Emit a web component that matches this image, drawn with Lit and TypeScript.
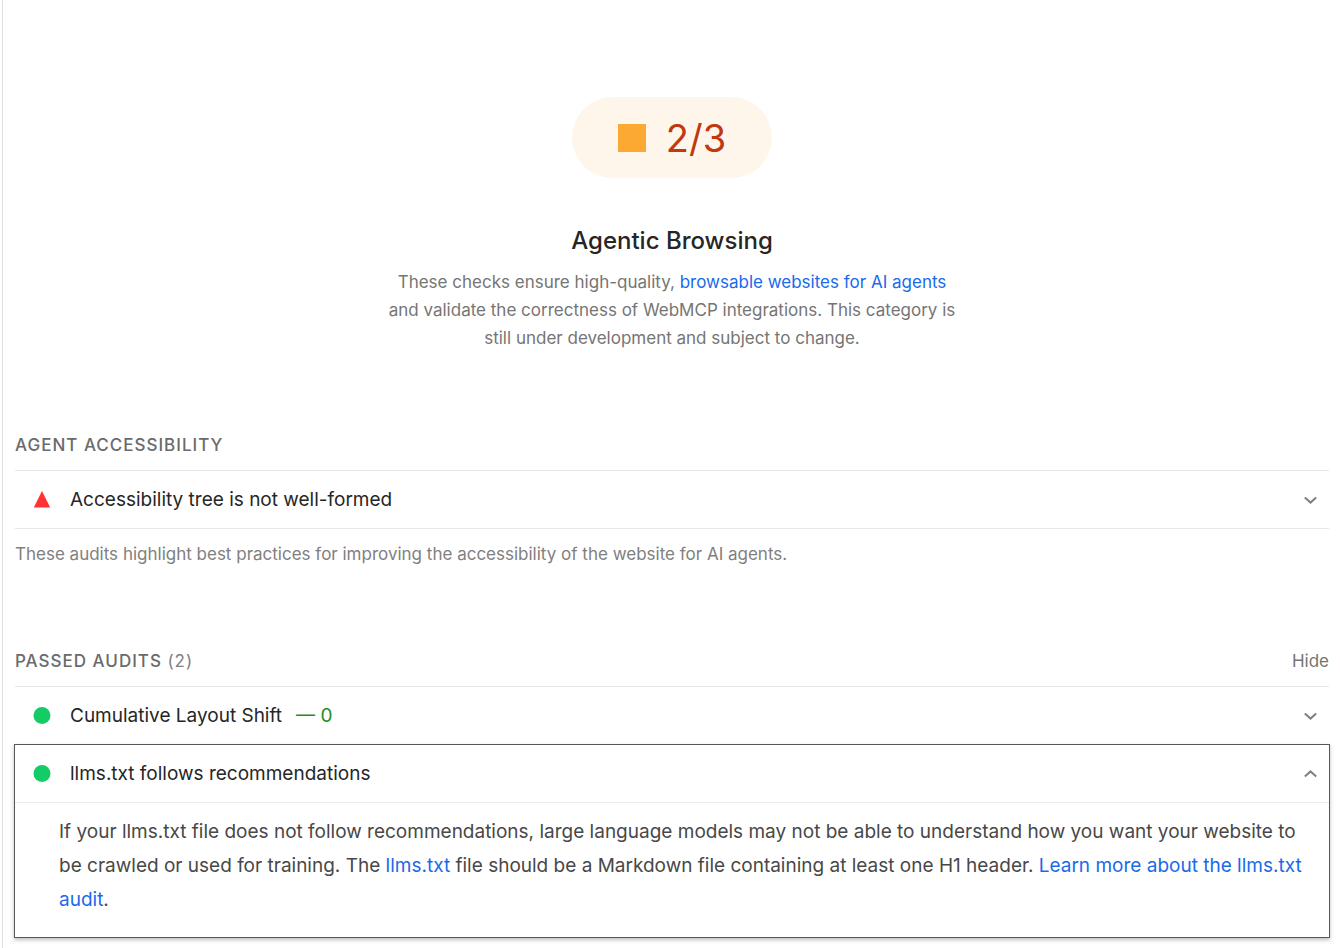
import { LitElement, html, css, nothing } from "lit";
import { customElement, property } from "lit/decorators.js";

const linkStyles = css`
  a { color: #1a6aeb; text-decoration: none; }
`;

const chevron = (open: boolean) => html`<svg width="13" height="8" viewBox="0 0 13 8" fill="none" stroke="#808080" stroke-width="2" aria-hidden="true"><path d=${open ? "M0.8 6.5 L6.5 1.4 L12.2 6.5" : "M0.8 1.5 L6.5 6.6 L12.2 1.5"} /></svg>`;

const failMark = html`<svg class="mark" viewBox="0 0 18 18" aria-hidden="true"><path d="M9 0 L17.2 16.5 H0.8 Z" fill="#f33" /></svg>`;
const passMark = html`<svg class="mark" viewBox="0 0 18 18" aria-hidden="true"><circle cx="9" cy="8.6" r="8.5" fill="#14cc66" /></svg>`;

@customElement("audit-row")
class AuditRow extends LitElement {
  @property() label = "";
  @property() value = "";
  @property() status = "pass";
  @property({ attribute: false }) details: unknown = nothing;
  @property({ type: Boolean, reflect: true }) open = false;

  static styles = [linkStyles, css`
    :host { display: block; border-top: 1px solid #e8e8e8; }
    :host([open]) { border: 1px solid #585858; box-shadow: 0 2px 4px rgba(0, 0, 0, 0.25); margin: 0 -1px; }
    button { display: flex; align-items: center; width: 100%; height: 57px; padding: 0 12px 0 18px; border: 0; background: none; font: inherit; color: #262626; text-align: left; cursor: pointer; }
    .mark { width: 18px; height: 18px; margin-right: 19px; flex: none; }
    .label { flex: 1; }
    .value { color: #1e8e1e; margin-left: 14px; }
    .body { margin: 0; border-top: 1px solid #ebebeb; padding: 12px 24px 20px 44px; line-height: 34px; color: #484848; }
  `];

  render() {
    return html`
      <button aria-expanded=${this.open ? "true" : "false"} @click=${() => (this.open = !this.open)}>
        ${this.status === "fail" ? failMark : passMark}
        <span class="label">${this.label}${this.value ? html`<span class="value">— ${this.value}</span>` : nothing}</span>
        ${chevron(this.open)}
      </button>
      ${this.open ? html`<p class="body">${this.details}</p>` : nothing}
    `;
  }
}

const llmsDetails = html`If your llms.txt file does not follow recommendations, large language models may not be able to understand how you want your website to be crawled or used for training. The <a href="#llms">llms.txt</a> file should be a Markdown file containing at least one H1 header. <a href="#learn">Learn more about the llms.txt audit</a>.`;

@customElement("app-root")
class AppRoot extends LitElement {
  @property({ type: Boolean }) hidePassed = false;

  static styles = [linkStyles, css`
    :host { display: block; box-sizing: border-box; min-height: 100vh; margin-left: 2px; border-left: 1px solid #e0e0e0; padding: 97px 11px 10px 12px; background: #fff; font: 19px/28px Inter, sans-serif; color: #262626; }
    header { display: flex; flex-direction: column; align-items: center; text-align: center; }
    .gauge { display: flex; align-items: center; gap: 20px; height: 81px; padding: 0 46px; border-radius: 41px; background: #fef6eb; color: #c0390f; font-size: 38px; }
    .square { width: 28px; height: 28px; background: #fca933; }
    h1 { margin: 47px 0 11px; font-size: 24px; line-height: 32px; font-weight: 500; }
    header p { margin: 0; max-width: 576px; font-size: 17px; color: #757575; }
    .head { display: flex; justify-content: space-between; align-items: center; height: 50px; color: #6a6a6a; font-size: 17px; }
    h2 { margin: 0; font-size: 17px; font-weight: 500; letter-spacing: 1px; text-transform: uppercase; }
    h2 span { font-weight: 400; color: #808080; }
    .group { margin-top: 68px; }
    .note { margin: 0; padding-top: 11px; border-top: 1px solid #e8e8e8; font-size: 17px; color: #808080; }
    .toggle { border: 0; padding: 0; background: none; font: inherit; color: #757575; cursor: pointer; }
  `];

  render() {
    return html`
      <header>
        <div class="gauge"><span class="square"></span><span>2/3</span></div>
        <h1>Agentic Browsing</h1>
        <p>These checks ensure high-quality, <a href="#agents">browsable websites for AI agents</a> and validate the correctness of WebMCP integrations. This category is still under development and subject to change.</p>
      </header>
      <section class="group">
        <div class="head"><h2>Agent accessibility</h2></div>
        <audit-row status="fail" label="Accessibility tree is not well-formed"></audit-row>
        <p class="note">These audits highlight best practices for improving the accessibility of the website for AI agents.</p>
      </section>
      <section class="group">
        <div class="head"><h2>Passed audits <span>(2)</span></h2>
          <button class="toggle" @click=${() => (this.hidePassed = !this.hidePassed)}>${this.hidePassed ? "Show" : "Hide"}</button></div>
        ${this.hidePassed ? nothing : html`
          <audit-row label="Cumulative Layout Shift" value="0"></audit-row>
          <audit-row open label="llms.txt follows recommendations" .details=${llmsDetails}></audit-row>`}
      </section>
    `;
  }
}
